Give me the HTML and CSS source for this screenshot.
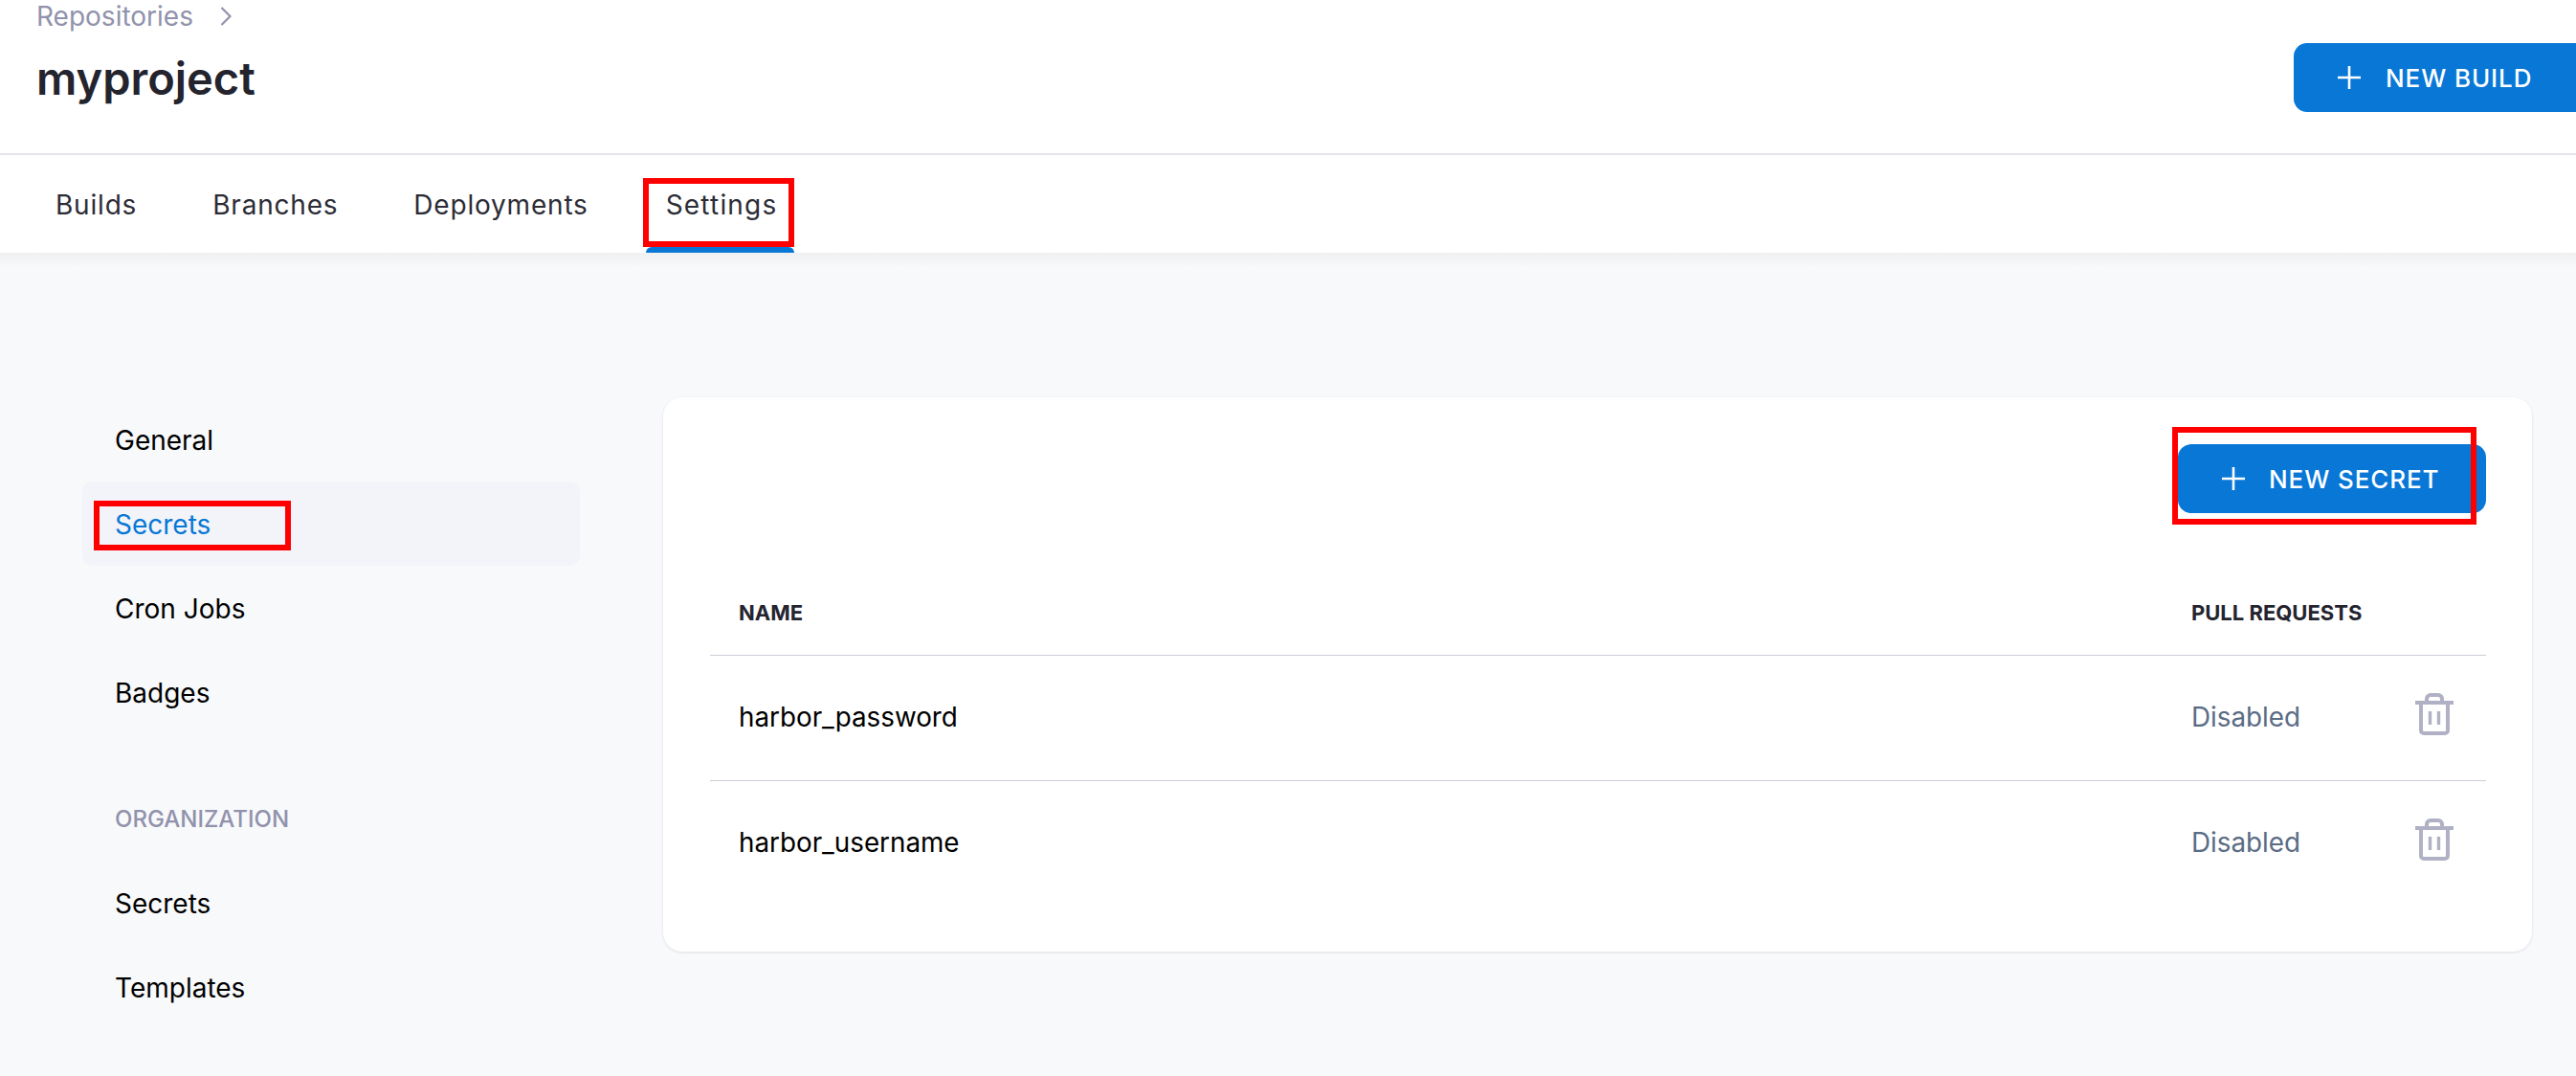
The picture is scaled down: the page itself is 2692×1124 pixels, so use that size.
FILE: index.html
```html
<!DOCTYPE html>
<html lang="en">
<head>
<meta charset="utf-8">
<title>myproject</title>
<link rel="stylesheet" href="styles.css">
</head>
<body>
<header class="top">
  <div class="title-block">
    <div class="crumb"><span>Repositories</span>
      <svg class="chev" width="12" height="20" viewBox="0 0 12 20" fill="none"><path d="M1.5 1l9 9-9 9" stroke="#9192ac" stroke-width="2.2"/></svg>
    </div>
    <h1 class="title">myproject</h1>
  </div>
  <button class="btn btn-build">
    <svg class="plus" width="24" height="24" viewBox="0 0 24 24" fill="none"><path d="M12 0v24M0 12h24" stroke="#fff" stroke-width="2.6"/></svg>
    <span>NEW BUILD</span>
  </button>
</header>
<nav class="tabs">
  <a class="tab">Builds</a>
  <a class="tab">Branches</a>
  <a class="tab">Deployments</a>
  <a class="tab tab-active">Settings<i class="mark mark-tab"></i></a>
</nav>
<main class="main">
  <aside class="side">
    <a class="side-item">General</a>
    <a class="side-item side-active">Secrets<i class="mark mark-side"></i></a>
    <a class="side-item">Cron Jobs</a>
    <a class="side-item">Badges</a>
    <div class="side-label">ORGANIZATION</div>
    <a class="side-item">Secrets</a>
    <a class="side-item">Templates</a>
  </aside>
  <section class="card">
    <div class="card-actions">
      <button class="btn btn-secret">
        <svg class="plus" width="24" height="24" viewBox="0 0 24 24" fill="none"><path d="M12 0v24M0 12h24" stroke="#fff" stroke-width="2.6"/></svg>
        <span>NEW SECRET</span>
        <i class="mark mark-btn"></i>
      </button>
    </div>
    <div class="row row-head">
      <div>NAME</div>
      <div>PULL REQUESTS</div>
      <div></div>
    </div>
    <div class="row row-body">
      <div class="name">harbor_password</div>
      <div class="state">Disabled</div>
      <svg class="trash" width="40" height="44" viewBox="0 0 40 44" fill="none" stroke="#b0b1c4" stroke-width="4"><path d="M0 10h40M6 10v29a3 3 0 0 0 3 3h22a3 3 0 0 0 3-3V10M12 9V6a4 4 0 0 1 4-4h8a4 4 0 0 1 4 4v3"/><path stroke-width="3.4" d="M15.5 19v14M24.5 19v14"/></svg>
    </div>
    <div class="row row-body row-last">
      <div class="name">harbor_username</div>
      <div class="state">Disabled</div>
      <svg class="trash" width="40" height="44" viewBox="0 0 40 44" fill="none" stroke="#b0b1c4" stroke-width="4"><path d="M0 10h40M6 10v29a3 3 0 0 0 3 3h22a3 3 0 0 0 3-3V10M12 9V6a4 4 0 0 1 4-4h8a4 4 0 0 1 4 4v3"/><path stroke-width="3.4" d="M15.5 19v14M24.5 19v14"/></svg>
    </div>
  </section>
</main>
</body>
</html>
```
FILE: styles.css
```css
* { box-sizing: border-box; }
html, body { margin: 0; height: 100%; }
body {
  width: 2692px;
  height: 1124px;
  overflow: hidden;
  background: #f8f9fb;
  font-family: Inter, "Noto Sans", sans-serif;
  color: #000;
  display: flex;
  flex-direction: column;
}
.top {
  height: 162px;
  flex: none;
  background: #fff;
  border-bottom: 2px solid #e4e5e8;
  display: flex;
  justify-content: space-between;
  padding: 45px 0 0 38px;
}
.title-block { margin-top: -45px; }
.crumb {
  height: 34px;
  display: flex;
  align-items: center;
  gap: 28px;
  font-size: 28px;
  color: #9192ac;
}
.title {
  margin: 20px 0 0;
  font-size: 47px;
  line-height: 56px;
  font-weight: 600;
  color: #24242e;
}
.btn {
  height: 72px;
  border: 0;
  padding: 0;
  background: #0877d6;
  color: #fff;
  display: flex;
  align-items: center;
  font-family: inherit;
  font-size: 26px;
  font-weight: 500;
  letter-spacing: 0.9px;
  position: relative;
}
.btn-build {
  width: 295px;
  padding-left: 46px;
  gap: 26px;
  border-radius: 14px 0 0 14px;
}
.btn-secret {
  width: 322px;
  padding-left: 46px;
  gap: 25px;
  border-radius: 14px;
}
.tabs {
  height: 102px;
  flex: none;
  background: #fff;
  display: flex;
  padding-left: 58px;
  gap: 79px;
  position: relative;
  z-index: 1;
}
.tab {
  position: relative;
  height: 102px;
  padding-top: 35px;
  font-size: 28px;
  line-height: 34px;
  letter-spacing: 0.8px;
  color: #2c2c36;
}
.tab-active { margin-left: 2px; letter-spacing: 1.2px; }
.tab-active::after {
  content: "";
  position: absolute;
  left: -21px;
  right: -18px;
  bottom: 0;
  height: 6px;
  background: #0877d6;
  border-radius: 6px 6px 0 0;
}
.main {
  flex: 1;
  display: flex;
  align-items: flex-start;
  padding: 151px 46px 0 86px;
  gap: 87px;
  background: linear-gradient(#eff0f2, #f8f9fb 16px);
}
.side { width: 520px; flex: none; }
.side-item {
  display: block;
  position: relative;
  height: 88px;
  padding: 1px 0 0 34px;
  font-size: 28px;
  line-height: 88px;
  color: #000;
  border-radius: 10px;
}
.side-active { background: #f3f4f9; color: #0877d6; }
.side-label {
  height: 132px;
  padding: 74px 0 0 34px;
  font-size: 24px;
  line-height: 30px;
  font-weight: 500;
  color: #9192ac;
}
.card {
  flex: 1;
  height: 579px;
  background: #fff;
  border-radius: 20px;
  box-shadow: 0 1px 3px rgba(40, 40, 70, .12);
  padding: 49px 48px 0 49px;
}
.card-actions { display: flex; justify-content: flex-end; }
.row {
  display: grid;
  grid-template-columns: 1fr 234px 74px;
  padding-left: 30px;
  align-items: center;
}
.row-head {
  height: 149px;
  padding-top: 59px;
  border-bottom: 1px solid #cdcdd8;
  font-size: 22px;
  font-weight: 700;
  color: #24242e;
}
.row-body { height: 131px; padding-bottom: 3px; border-bottom: 1px solid #cdcdd8; }
.row-last { border-bottom: 0; padding-bottom: 4px; }
.name { font-size: 27.8px; color: #000; }
.state { font-size: 27.8px; color: #5a6c85; }
.trash { margin-top: -6px; }
.mark {
  position: absolute;
  border: 6px solid #ff0000;
  pointer-events: none;
}
.mark-tab { left: -24px; top: 24px; width: 158px; height: 72px; }
.mark-side { left: 12px; top: 20px; width: 206px; height: 52px; }
.mark-btn { left: -6px; top: -18px; width: 318px; height: 102px; }
```
